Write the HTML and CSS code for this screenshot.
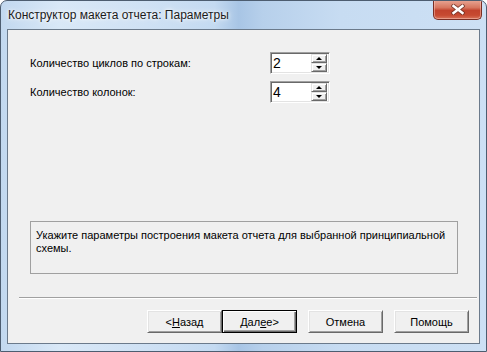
FILE: index.html
```html
<!DOCTYPE html>
<html lang="ru">
<head>
  <meta charset="UTF-8">
  <title>Конструктор макета отчета: Параметры</title>
  <link rel="stylesheet" href="styles.css">
</head>
<body>
  <div class="window">
    <!-- Title bar -->
    <div class="titlebar">
      <span class="title">Конструктор макета отчета: Параметры</span>
      <button class="close-btn" title="Закрыть">
        <svg width="14" height="11" viewBox="0 0 14 11">
          <path d="M2.5 2 L11.5 9 M11.5 2 L2.5 9" stroke="#6e3328" stroke-opacity="0.8" stroke-width="4.2" stroke-linecap="square"/>
          <path d="M2.5 2 L11.5 9 M11.5 2 L2.5 9" stroke="#ffffff" stroke-width="2.4" stroke-linecap="square"/>
        </svg>
      </button>
    </div>

    <!-- Client area -->
    <div class="client">
      <div class="fields">
        <label class="field-label">Количество циклов по строкам:</label>
        <div class="spinner">
          <span class="spin-value">2</span>
          <div class="spin-buttons">
            <span class="spin-btn"><i class="arrow-up"></i></span>
            <span class="spin-btn"><i class="arrow-down"></i></span>
          </div>
        </div>

        <label class="field-label">Количество колонок:</label>
        <div class="spinner">
          <span class="spin-value">4</span>
          <div class="spin-buttons">
            <span class="spin-btn"><i class="arrow-up"></i></span>
            <span class="spin-btn"><i class="arrow-down"></i></span>
          </div>
        </div>
      </div>

      <div class="info-box">
        Укажите параметры построения макета отчета для выбранной принципиальной схемы.
      </div>

      <div class="separator"></div>

      <div class="buttons">
        <button class="btn">&lt;<u>Н</u>азад</button>
        <button class="btn btn-default">Дал<u>е</u>е&gt;</button>
        <button class="btn btn-gap">Отмена</button>
        <button class="btn btn-gap">Помощь</button>
      </div>
    </div>
  </div>
</body>
</html>
```

FILE: styles.css
```css
body {
  margin: 0;
  padding: 0;
  background-color: #ffffff;
  font-family: "Liberation Sans", Arial, sans-serif;
}

.window {
  width: 487px;
  height: 352px;
  box-sizing: border-box;
  border: 1px solid #4d5d70;
  border-radius: 7px 7px 0 0;
  background: linear-gradient(to right,
    #c2d8ef 0%, #d9e8f7 12%, #cfe1f4 30%, #c4daf1 44%,
    #a8c5e5 49%, #b7d0eb 54%, #c7dcf2 70%, #cde0f4 100%);
  overflow: hidden;
}

/* Title bar */
.titlebar {
  height: 28px;
  display: flex;
  justify-content: space-between;
  align-items: flex-start;
}

.title {
  padding: 7px 0 0 7px;
  font-size: 12px;
  line-height: 15px;
  color: #1b1b1b;
  text-shadow: 0 0 6px #ffffff, 0 0 3px #ffffff;
}

.close-btn {
  width: 49px;
  height: 20px;
  margin: -1px 4px 0 0;
  padding: 0;
  border: 1px solid #7a2e24;
  border-top: none;
  border-radius: 0 0 5px 5px;
  background: linear-gradient(to bottom, #e9a796 0%, #d7765f 40%, #c2432d 55%, #c74a31 80%, #d8735a 100%);
  box-shadow: inset 0 0 0 1px rgba(255, 210, 200, 0.45);
  display: flex;
  align-items: center;
  justify-content: center;
}

/* Client area */
.client {
  height: 315px;
  box-sizing: border-box;
  margin: 0 6px;
  border: 1px solid #6b7a8b;
  background-color: #f0f0f0;
  display: flex;
  flex-direction: column;
  font-size: 11px;
  color: #000000;
}

.fields {
  display: grid;
  grid-template-columns: 240px 60px;
  row-gap: 7px;
  align-items: center;
  padding: 22px 0 0 22px;
}

.field-label {
  line-height: 13px;
}

/* Spinner */
.spinner {
  width: 60px;
  height: 22px;
  box-sizing: border-box;
  border: 1px solid;
  border-color: #a0a0a0 #ffffff #ffffff #a0a0a0;
  box-shadow: inset 1px 1px 0 #696969, inset -1px -1px 0 #e3e3e3;
  background-color: #ffffff;
  display: flex;
  padding: 1px;
}

.spin-value {
  flex: 1;
  padding-left: 1px;
  font-size: 14px;
  line-height: 19px;
  color: #000000;
}

.spin-buttons {
  width: 16px;
  display: flex;
  flex-direction: column;
  padding-right: 1px;
}

.spin-btn {
  flex: 1;
  box-sizing: border-box;
  background-color: #f0f0f0;
  border: 1px solid;
  border-color: #e3e3e3 #696969 #696969 #e3e3e3;
  box-shadow: inset 1px 1px 0 #ffffff, inset -1px -1px 0 #a0a0a0;
  display: flex;
  align-items: center;
  justify-content: center;
}

.arrow-up,
.arrow-down {
  width: 0;
  height: 0;
  border-left: 3px solid transparent;
  border-right: 3px solid transparent;
}

.arrow-up {
  border-bottom: 3px solid #000000;
}

.arrow-down {
  border-top: 3px solid #000000;
}

/* Info box */
.info-box {
  width: 428px;
  height: 53px;
  box-sizing: border-box;
  margin: 118px 0 0 22px;
  padding: 7px 5px 0 5px;
  border: 1px solid #a0a0a0;
  line-height: 13px;
}

.separator {
  height: 1px;
  margin: 23px 2px 0 11px;
  background-color: #a0a0a0;
  border-bottom: 1px solid #ffffff;
}

/* Buttons */
.buttons {
  display: flex;
  justify-content: flex-end;
  margin-top: 11px;
  padding-right: 10px;
}

.btn {
  width: 75px;
  height: 23px;
  box-sizing: border-box;
  padding: 0;
  font-family: "Liberation Sans", Arial, sans-serif;
  font-size: 11px;
  color: #000000;
  background-color: #f0f0f0;
  border: 1px solid;
  border-color: #ffffff #696969 #696969 #ffffff;
  box-shadow: inset 1px 1px 0 #e3e3e3, inset -1px -1px 0 #a0a0a0;
}

.btn-default {
  border-color: #000000;
  box-shadow: inset 1px 1px 0 #ffffff, inset -1px -1px 0 #696969, inset -2px -2px 0 #a0a0a0;
}

.btn-gap {
  margin-left: 11px;
}
```
